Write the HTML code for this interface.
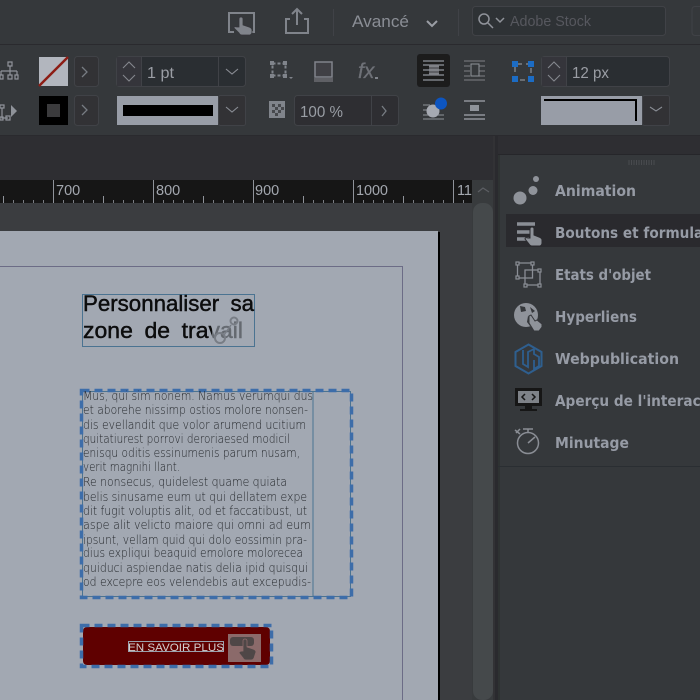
<!DOCTYPE html>
<html><head><meta charset="utf-8"><style>
html,body{margin:0;padding:0;background:#36373b;width:700px;height:700px;overflow:hidden}
svg{display:block}
text{font-family:"Liberation Sans",sans-serif}
.b{fill:#303135;stroke:#414347;stroke-width:1}
.g{fill:none;stroke:#8f939a;stroke-width:1.2}
.body text{font-size:12px;fill:#24272b;stroke:none;font-family:"DejaVu Sans",sans-serif;font-weight:200}
.p text{font-size:15px;font-weight:bold;fill:#969ba5;font-family:"DejaVu Sans",sans-serif}
.t{font-size:22px;fill:#0a0b0d;stroke:#0a0b0d;stroke-width:.45px;word-spacing:5px}
</style></head><body>
<svg width="700" height="700" viewBox="0 0 700 700" xmlns="http://www.w3.org/2000/svg">
<defs><filter id="s" x="0" y="0" width="100%" height="100%"><feGaussianBlur stdDeviation="0.35"/></filter></defs>
<g filter="url(#s)">
<rect width="700" height="700" fill="#36373b"/>
<rect x="0" y="44" width="700" height="1" fill="#2b2c2f"/>
<rect x="0" y="135" width="700" height="1" fill="#2a2b2e"/>
<rect x="0" y="136" width="498" height="44" fill="#2d2e31"/>
<rect x="495" y="136" width="205" height="18" fill="#2d2e31"/>
<!-- top bar -->
<path d="M234 32H229V13H254V32H249" fill="none" stroke="#80848b" stroke-width="2"/>
<path d="M239 27V19q0-2 2-2t2 2v6l6 2q3 1 3 3v2q0 2-2 3h-8q-2 0-3-2l-5-5q0-2 3-1z" fill="#80848b" stroke="#36373b" stroke-width=".8"/>
<path d="M290 19H286V33H308V19H304M297 25V10M292 14L297 9L302 14" fill="none" stroke="#80848b" stroke-width="2"/>
<rect x="333" y="9" width="1" height="27" fill="#414347"/>
<text x="352" y="27" font-size="17" fill="#8a8e95" textLength="57" lengthAdjust="spacingAndGlyphs">Avancé</text>
<path d="M427 21L432 26L437 21" fill="none" stroke="#9a9ea5" stroke-width="2"/>
<rect x="458" y="9" width="1" height="27" fill="#414347"/>
<rect x="472.500" y="6.500" width="193" height="29" rx="3" fill="#2f3034" stroke="#414347"/>
<circle cx="484" cy="19" r="5" fill="none" stroke="#8f939a" stroke-width="1.500"/>
<path d="M488 23L493 28M496 18L500 22L504 18" fill="none" stroke="#8f939a" stroke-width="1.500"/>
<text x="510" y="26" font-size="15" fill="#56595e" textLength="81" lengthAdjust="spacingAndGlyphs">Adobe Stock</text>
<rect x="692" y="6.500" width="20" height="29" rx="3" fill="#36373b" stroke="#414347"/>

<!-- left icons -->
<path d="M8 62h4v4h-4zM10 66v5M1 71v4M10 71v4M17 71v4M1 71h16M0 75h3v4h-3zM8 75h4v4h-4zM15 75h3v4h-3z" class="g"/>
<path d="M2 108v10h6M0 105h4v3h-4zM0 117h3v3h-3zM6 116h4v4h-4z" class="g"/>
<path d="M11 105l6 6-6 6z" fill="#8f939a"/>
<!-- swatch none -->
<rect x="39" y="57" width="29" height="29" fill="#b2b6be"/>
<path d="M39 86L68 57" stroke="#8d1e14" stroke-width="2.500"/>
<rect x="74.500" y="56.500" width="24" height="30" rx="3" class="b"/>
<path d="M82 67L87 72L82 77" fill="none" stroke="#777b82" stroke-width="1.300"/>
<rect x="39" y="96" width="29" height="29" fill="#000"/>
<rect x="47" y="104" width="13" height="13" fill="#3a3b3e"/>
<rect x="74.500" y="95.500" width="24" height="30" rx="3" class="b"/>
<path d="M82 105L87 110L82 115" fill="none" stroke="#777b82" stroke-width="1.300"/>
<!-- 1 pt -->
<rect x="116.500" y="56.500" width="129" height="30" rx="3" fill="#2c2d31" stroke="#414347"/>
<rect x="117" y="57" width="24" height="29" fill="#35363a"/>
<path d="M141.500 57V86M218.500 57V86" stroke="#414347"/>
<path d="M123 68L129 62L135 68M123 75L129 81L135 75" fill="none" stroke="#84878e" stroke-width="1.100"/>
<text x="147" y="78" font-size="15.500" fill="#9a9ea5" textLength="27" lengthAdjust="spacingAndGlyphs">1 pt</text>
<path d="M226 69L232 74L238 69" fill="none" stroke="#8a8e95" stroke-width="1.100"/>
<!-- stroke style -->
<rect x="117" y="96" width="101" height="29" fill="#989da7"/>
<rect x="123" y="105" width="90" height="11" fill="#000"/>
<rect x="218.500" y="95.500" width="27" height="30" rx="2" class="b"/>
<path d="M226 107L232 112L238 107" fill="none" stroke="#8a8e95" stroke-width="1.100"/>
<!-- frame icons -->
<path d="M272.500 63.500h13v12h-13z" fill="none" stroke="#80848b" stroke-width="2" stroke-dasharray="3 2"/>
<rect x="270" y="61" width="4" height="4" fill="#80848b"/><rect x="283" y="61" width="4" height="4" fill="#80848b"/><rect x="270" y="74" width="4" height="4" fill="#80848b"/><rect x="283" y="74" width="4" height="4" fill="#80848b"/>
<path d="M289 77h4l-2 2z" fill="#80848b"/>
<rect x="315" y="62" width="17" height="15" fill="#404145" stroke="#80848b" stroke-width="1.500"/>
<rect x="314" y="78" width="19" height="4" fill="#5e6065"/>
<rect x="269" y="101" width="16" height="17" fill="#80848b"/>
<path d="M272 104h3v3h-3zM278 104h3v3h-3zM275 107h3v3h-3zM281 107h3v3h-3zM272 110h3v3h-3zM278 110h3v3h-3zM275 113h3v3h-3z" fill="#47494d"/>
<rect x="294.500" y="95.500" width="104" height="30" rx="3" fill="#2e2f33" stroke="#414347"/>
<path d="M371.500 96V125" stroke="#414347"/>
<text x="300" y="117" font-size="15.500" fill="#9a9ea5" textLength="43" lengthAdjust="spacingAndGlyphs">100 %</text>
<path d="M382 106L386 111L382 116" fill="none" stroke="#777b82" stroke-width="1.300"/>
<text x="358" y="78" font-size="21" font-style="italic" fill="#6e7177" stroke="#6e7177" stroke-width=".3">fx</text>
<rect x="375" y="77" width="3" height="2" fill="#80848b"/>
<!-- wrap icons -->
<rect x="417" y="54" width="33" height="33" rx="3" fill="#1c1d1f"/>
<path d="M423 61h21M423 65h21M423 70h21M423 75h21M423 80h21" stroke="#8f939a" stroke-width="1.200"/>
<rect x="429" y="64" width="10" height="12" fill="#5e6065"/>
<path d="M429 66h10M429 70h10M429 74h10" stroke="#a0a4ab" stroke-width="1"/>
<path d="M464 61h21M464 66h6M479 66h6M464 71h6M479 71h6M464 76h6M479 76h6M464 80h21" stroke="#6f7278" stroke-width="1.300"/>
<rect x="471" y="64" width="8" height="12" fill="none" stroke="#8f939a"/>
<path d="M423 105h7M423 110h5M423 115h5M423 119h21M438 115h6" stroke="#7e8288" stroke-width="1.300"/>
<circle cx="433" cy="111" r="6.500" fill="#a6aab2"/>
<circle cx="441" cy="103.500" r="6" fill="#0f55c0"/>
<path d="M464 101h21M464 115h21M464 119h21" stroke="#8f939a" stroke-width="1.500"/>
<rect x="470" y="105" width="9" height="6" fill="#8f939a"/>
<!-- 12 px -->
<path d="M515 64h16v16h-16z" fill="none" stroke="#6b6e73" stroke-width="2" stroke-dasharray="5 4" stroke-dashoffset="-2"/>
<rect x="512" y="61" width="6" height="6" fill="#1e6cc4"/><rect x="528" y="61" width="6" height="6" fill="#1e6cc4"/><rect x="512" y="76" width="6" height="6" fill="#1e6cc4"/><rect x="528" y="76" width="6" height="6" fill="#1e6cc4"/>
<rect x="541.500" y="56.500" width="128" height="30" rx="3" fill="#2c2d31" stroke="#414347"/>
<rect x="542" y="57" width="24" height="29" fill="#35363a"/>
<path d="M566.500 57V86" stroke="#414347"/>
<path d="M548 68L554 62L560 68M548 75L554 81L560 75" fill="none" stroke="#84878e" stroke-width="1.100"/>
<text x="572" y="78" font-size="15.500" fill="#9a9ea5" textLength="37" lengthAdjust="spacingAndGlyphs">12 px</text>
<rect x="541" y="96" width="101" height="29" fill="#989da7"/>
<path d="M544 100H636V121" fill="none" stroke="#000" stroke-width="2"/>
<rect x="642.500" y="95.500" width="27" height="30" rx="2" class="b"/>
<path d="M650 107L656 111L662 107" fill="none" stroke="#8a8e95" stroke-width="1.100"/>

<!-- ruler -->
<rect x="0" y="180" width="472" height="23" fill="#131416"/>
<g fill="#a4a8af" font-size="14.500">
<text x="56" y="195">700</text><text x="156" y="195">800</text><text x="255" y="195">900</text><text x="356" y="195" textLength="32">1000</text><text x="457" y="195" textLength="15">11</text>
</g>
<path d="M53.500 180V203M153.500 180V203M253.500 180V203M353.500 180V203M453.500 180V203M3.500 196V203M103.500 196V203M203.500 196V203M303.500 196V203M403.500 196V203" stroke="#8f939a" stroke-width="1"/>
<path d="M13.500 200V203M23.500 200V203M33.500 200V203M43.500 200V203M63.500 200V203M73.500 200V203M83.500 200V203M93.500 200V203M113.500 200V203M123.500 200V203M133.500 200V203M143.500 200V203M163.500 200V203M173.500 200V203M183.500 200V203M193.500 200V203M213.500 200V203M223.500 200V203M233.500 200V203M243.500 200V203M263.500 200V203M273.500 200V203M283.500 200V203M293.500 200V203M313.500 200V203M323.500 200V203M333.500 200V203M343.500 200V203M363.500 200V203M373.500 200V203M383.500 200V203M393.500 200V203M413.500 200V203M423.500 200V203M433.500 200V203M443.500 200V203M463.500 200V203" stroke="#7a7d83" stroke-width="1"/>
<!-- pasteboard -->
<rect x="0" y="203" width="472" height="497" fill="#3a3c3f"/>
<rect x="0" y="231" width="438" height="469" fill="#a2a8b2"/>
<rect x="438" y="232" width="2" height="468" fill="#050506"/>
<rect x="402" y="266" width="1" height="434" fill="#6c6c86"/>
<rect x="0" y="266" width="402" height="1" fill="#6c6c86"/>
<!-- scrollbar -->
<rect x="472" y="180" width="23" height="520" fill="#383a3d"/>
<rect x="473" y="203" width="20" height="497" rx="9" fill="#45484b"/>
<path d="M478 192L483 188L489 192" fill="none" stroke="#5b5e63" stroke-width="1.300"/>
<rect x="493" y="136" width="2" height="564" fill="#313236"/>
<!-- panel -->
<rect x="495" y="136" width="3" height="564" fill="#2a2b2e"/>
<rect x="498" y="154" width="202" height="1" fill="#26272a"/>
<rect x="498" y="155" width="202" height="545" fill="#36373b"/>
<rect x="498" y="155" width="2" height="545" fill="#2f3033"/>
<rect x="498" y="466" width="202" height="1" fill="#2c2d30"/>
<path d="M629 160v5M631.500 160v5M634 160v5M636.500 160v5M639 160v5M641.500 160v5M644 160v5M646.500 160v5M649 160v5M651.500 160v5M654 160v5" stroke="#4a4c50" stroke-width="1"/>
<rect x="506" y="214" width="194" height="33" fill="#2a2b2f"/>
<g class="p">
<text x="555" y="196" textLength="81" lengthAdjust="spacingAndGlyphs">Animation</text>
<text x="555" y="238" textLength="177" lengthAdjust="spacingAndGlyphs">Boutons et formulaires</text>
<text x="555" y="280" textLength="96" lengthAdjust="spacingAndGlyphs">Etats d'objet</text>
<text x="555" y="322" textLength="82" lengthAdjust="spacingAndGlyphs">Hyperliens</text>
<text x="555" y="364" textLength="124" lengthAdjust="spacingAndGlyphs">Webpublication</text>
<text x="555" y="406" textLength="176" lengthAdjust="spacingAndGlyphs">Aperçu de l'interaction</text>
<text x="555" y="448" textLength="74" lengthAdjust="spacingAndGlyphs">Minutage</text>
</g>
<!-- panel icons -->
<circle cx="520" cy="198" r="6.500" fill="#8f939a"/><circle cx="533" cy="190.500" r="4.500" fill="#8f939a"/><circle cx="536" cy="179" r="3" fill="#8f939a"/>
<path d="M517 224h18M517 232h13M517 239h12" stroke="#8a8e95" stroke-width="3.500"/>
<path d="M530 238V229q0-2 2-2t2 2v6l5 2q3 1 3 3v3q0 2-2 3h-8q-2 0-3-2l-4-5q0-2 3-1z" fill="#8f939a" stroke="#2a2b2f"/>
<path d="M517.500 263h15v15h-15zM525 270h15v15h-15z" fill="none" stroke="#8a8e95" stroke-width="1.300"/>
<g fill="#36373b" stroke="#8a8e95" stroke-width="1.200"><rect x="516" y="262" width="3" height="3"/><rect x="531" y="262" width="3" height="3"/><rect x="516" y="276" width="3" height="3"/><rect x="524" y="284" width="3" height="3"/><rect x="538" y="284" width="3" height="3"/><rect x="538" y="269" width="3" height="3"/></g>
<circle cx="526" cy="315" r="12" fill="#8f939a"/>
<path d="M520 306l5 1 1 4-5 1zM530 307l5 4-3 2zM528 316l4 5-2 5-3-4z" fill="#36373b"/>
<path d="M529 316l2-1 4 6 2-1 5 4v3l-3 4h-5l-5-8z" fill="#8f939a" stroke="#36373b"/>
<path d="M528.500 344.500l13 7.500v14l-13 7.500-13-7.500v-14z" fill="none" stroke="#2f5f8f" stroke-width="2"/>
<path d="M523 350v14l5 3v-15l6-3M534 349v5l5 3v9l-5 3v-9" fill="none" stroke="#2f5f8f" stroke-width="1.800"/>
<rect x="515" y="388" width="27" height="18" fill="#141517"/>
<rect x="518" y="391" width="21" height="12" fill="#7e8288"/>
<path d="M525 394l-3 3 3 3M532 394l3 3-3 3" fill="none" stroke="#141517" stroke-width="1.500"/>
<rect x="525" y="406" width="7" height="3" fill="#141517"/><rect x="520" y="409" width="17" height="2" fill="#141517"/>
<circle cx="528" cy="443" r="10.500" fill="none" stroke="#8a8e95" stroke-width="1.500"/>
<path d="M523 429h10M528 429v4M528 443l7-6M516 433l4-4M515 430l5 4" fill="none" stroke="#8a8e95" stroke-width="1.500"/>

<!-- title frame -->
<rect x="82.500" y="294.500" width="172" height="52" fill="none" stroke="#4c7391" stroke-width="1"/>
<text class="t" x="83" y="311" textLength="171" lengthAdjust="spacingAndGlyphs">Personnaliser sa</text>
<text class="t" x="83" y="338" textLength="160" lengthAdjust="spacingAndGlyphs">zone de travail</text>
<rect x="212" y="322" width="32" height="22" fill="#a2a8b2" opacity=".6"/>
<circle cx="220" cy="338" r="5" fill="none" stroke="#787d85" stroke-width="2"/>
<circle cx="234" cy="321" r="3.500" fill="none" stroke="#787d85" stroke-width="2"/>
<path d="M224 335L231 325" stroke="#787d85" stroke-width="1.500"/>
<!-- body text -->
<rect x="82.500" y="391.500" width="268" height="205" fill="none" stroke="#4c7391" stroke-width="1"/>
<rect x="81.500" y="390.500" width="270" height="207" fill="none" stroke="#3d6da9" stroke-width="3.500" stroke-dasharray="8 5"/>
<rect x="312.500" y="391" width="1" height="205" fill="#4c7391"/>
<g class="body">
<text x="83" y="400" textLength="230" lengthAdjust="spacingAndGlyphs">Mus, qui sim nonem. Namus verumqui dus</text>
<text x="83" y="414" textLength="225" lengthAdjust="spacingAndGlyphs">et aborehe nissimp ostios molore nonsen-</text>
<text x="83" y="429" textLength="223" lengthAdjust="spacingAndGlyphs">dis evellandit que volor arumend ucitium</text>
<text x="83" y="443" textLength="207" lengthAdjust="spacingAndGlyphs">quitatiurest porrovi deroriaesed modicil</text>
<text x="83" y="457" textLength="217" lengthAdjust="spacingAndGlyphs">enisqu oditis essinumenis parum nusam,</text>
<text x="83" y="471" textLength="97" lengthAdjust="spacingAndGlyphs">verit magnihi llant.</text>
<text x="83" y="486" textLength="204" lengthAdjust="spacingAndGlyphs">Re nonsecus, quidelest quame quiata</text>
<text x="83" y="501" textLength="224" lengthAdjust="spacingAndGlyphs">belis sinusame eum ut qui dellatem expe</text>
<text x="83" y="515" textLength="224" lengthAdjust="spacingAndGlyphs">dit fugit voluptis alit, od et faccatibust, ut</text>
<text x="83" y="529" textLength="228" lengthAdjust="spacingAndGlyphs">aspe alit velicto maiore qui omni ad eum</text>
<text x="83" y="544" textLength="224" lengthAdjust="spacingAndGlyphs">ipsunt, vellam quid qui dolo eossimin pra-</text>
<text x="83" y="557" textLength="220" lengthAdjust="spacingAndGlyphs">dius expliqui beaquid emolore molorecea</text>
<text x="83" y="572" textLength="225" lengthAdjust="spacingAndGlyphs">quiduci aspiendae natis delia ipid quisqui</text>
<text x="83" y="586" textLength="228" lengthAdjust="spacingAndGlyphs">od excepre eos velendebis aut excepudis-</text>
</g>
<!-- button -->
<rect x="83" y="627" width="187" height="38" rx="4" fill="#5e0000"/>
<rect x="81.500" y="625.500" width="190" height="41" fill="none" stroke="#3d6da9" stroke-width="3.500" stroke-dasharray="8 5"/>
<rect x="128.500" y="641.500" width="95" height="10" fill="none" stroke="#9aa0ac" stroke-width="1"/>
<text x="128" y="651" font-size="11" fill="#d4d0d0" textLength="96" lengthAdjust="spacingAndGlyphs">EN SAVOIR PLUS</text>
<rect x="228" y="634" width="33" height="28" fill="#8b6a6a"/>
<rect x="230" y="637" width="24" height="9" rx="3" fill="#504646"/>
<path d="M243 650V641q0-2 2-2t2 2v6l6 2q3 1 3 3l-2 6q-1 2-3 2h-5q-2 0-3-2l-4-5q0-2 4-2z" fill="#504646" stroke="#8b6a6a" stroke-width=".8"/>
</g>
</svg>
</body></html>
